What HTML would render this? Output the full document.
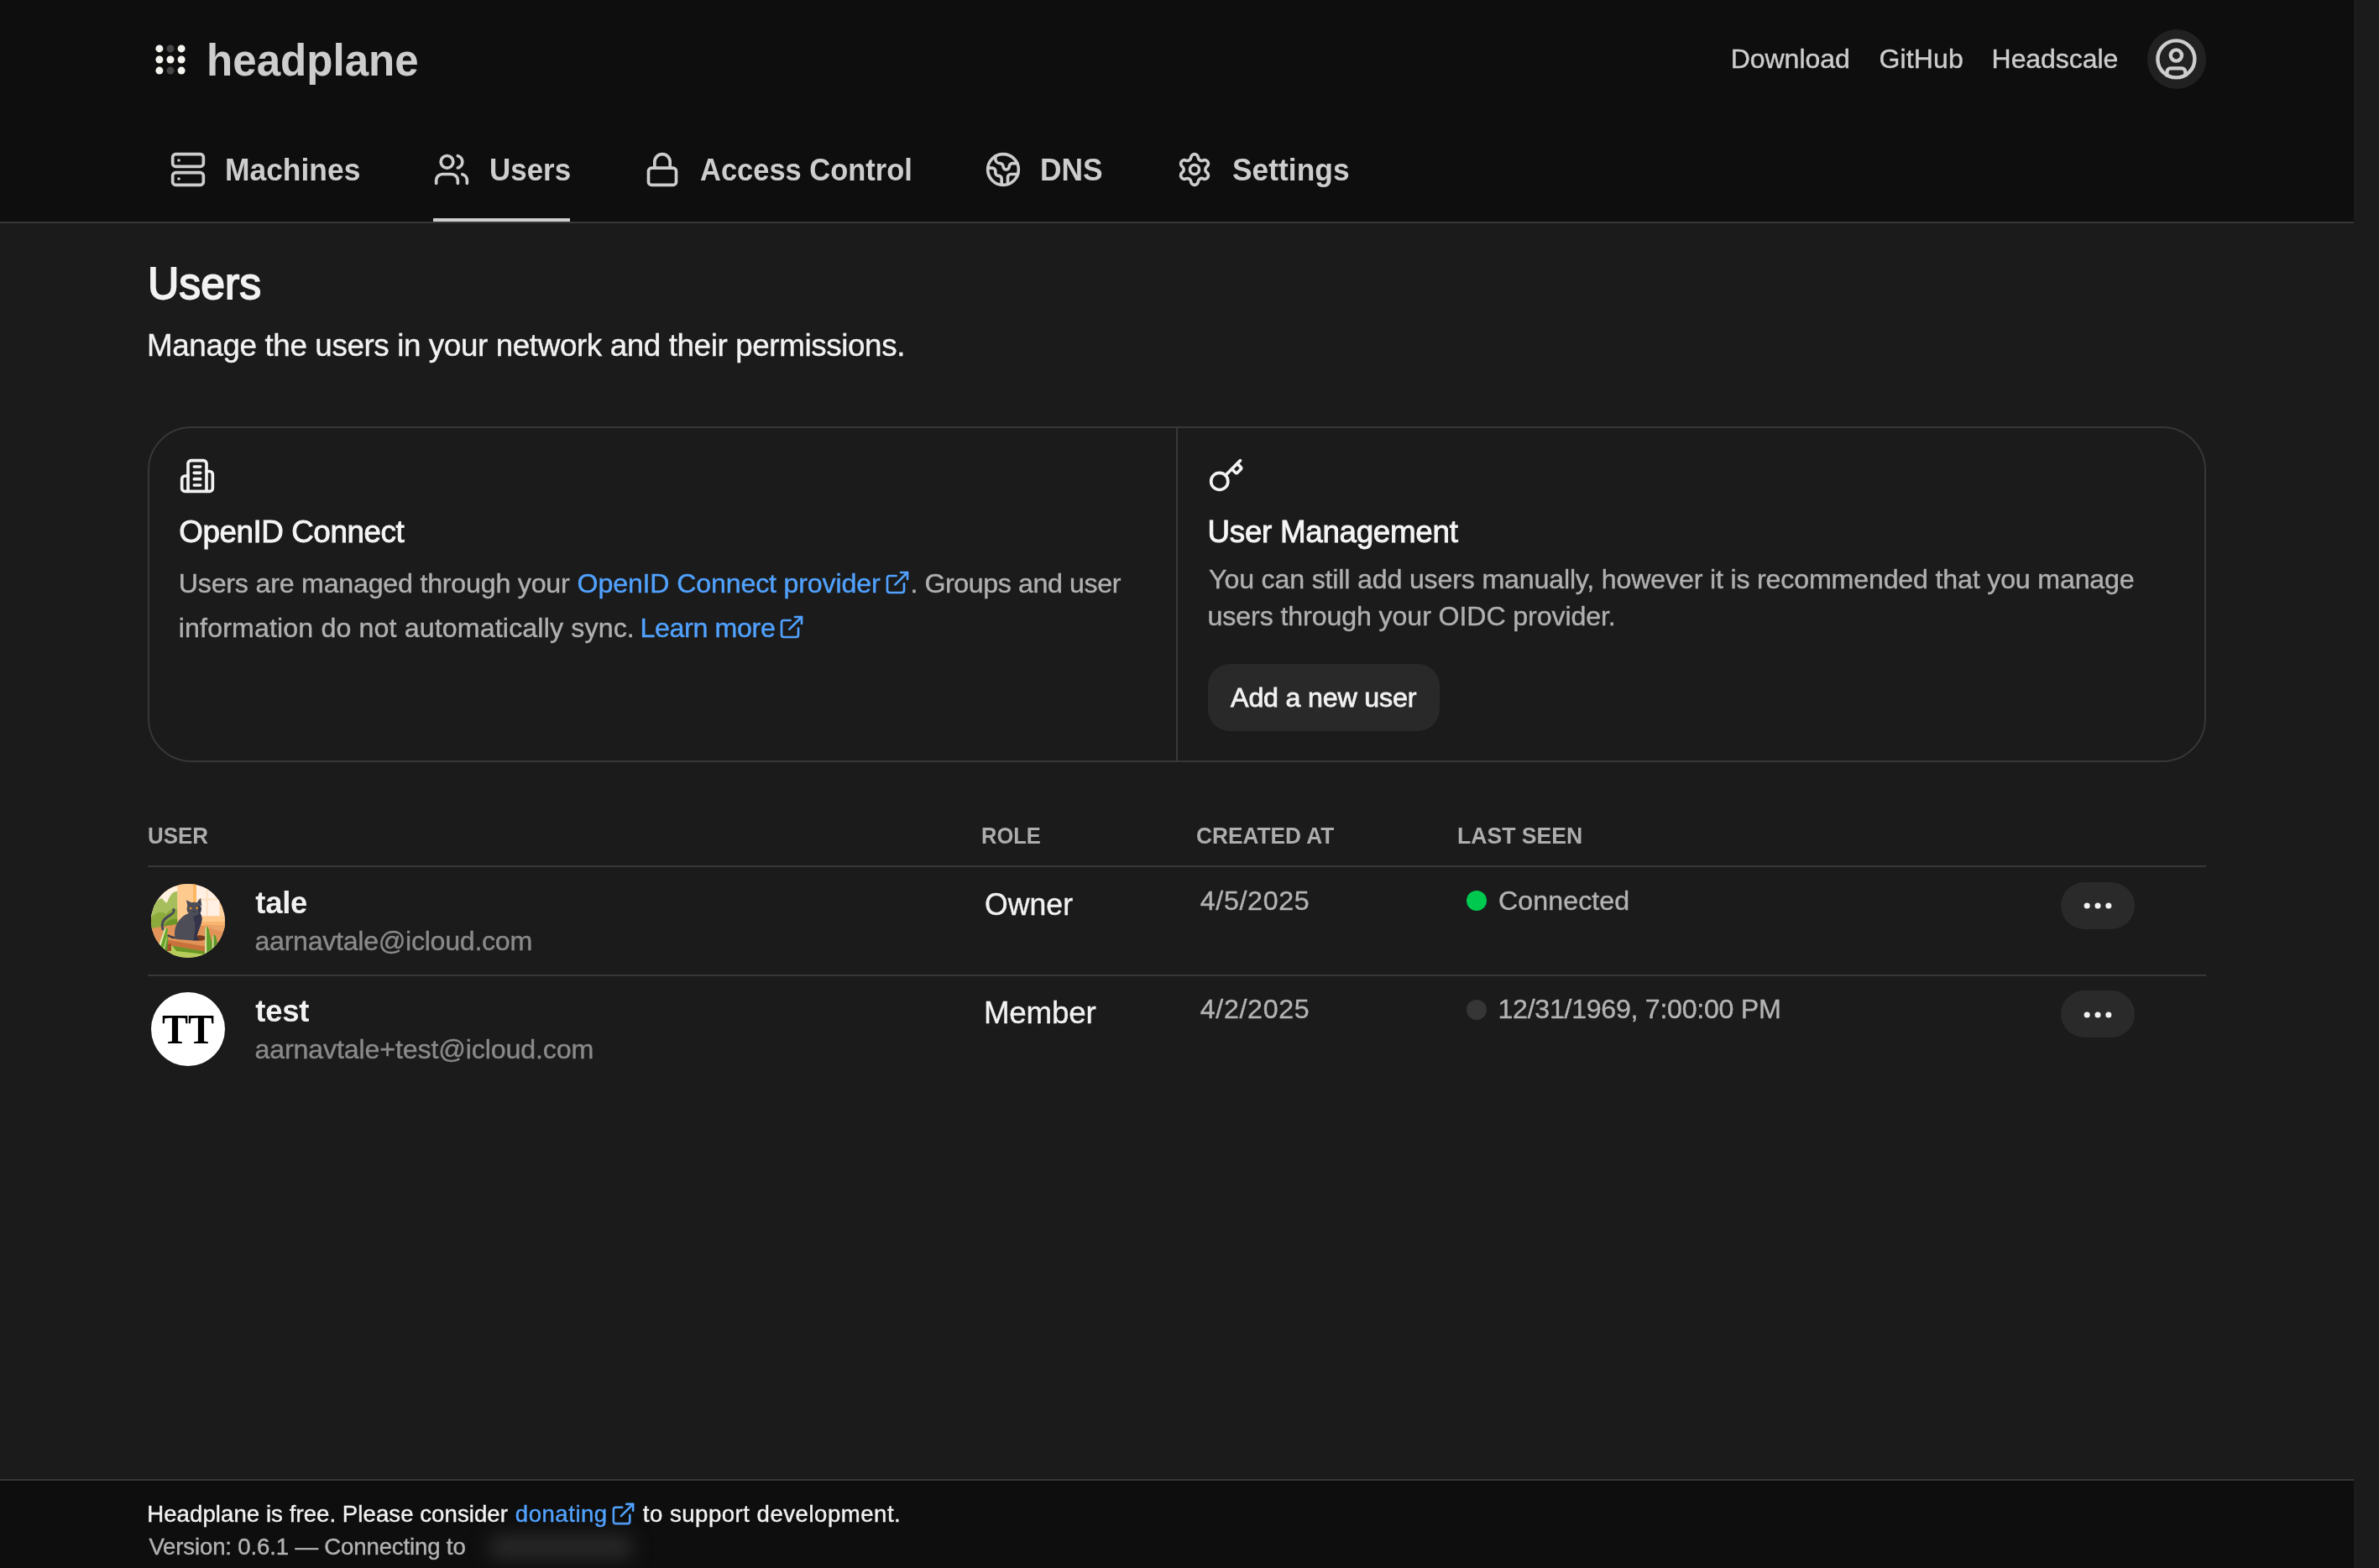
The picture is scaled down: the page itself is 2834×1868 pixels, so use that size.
<!DOCTYPE html>
<html lang="en">
<head>
<meta charset="utf-8">
<title>Users | Headplane</title>
<style>
*{box-sizing:border-box;margin:0;padding:0}
html,body{width:2834px;height:1868px;background:#1b1b1b}
body{font-family:"Liberation Sans",sans-serif;color:#f2f2f2}
#root{position:relative;width:2834px;height:1868px;overflow:hidden;background:#1b1b1b}
.a{position:absolute}
.t{position:absolute;white-space:pre;display:block;transform-origin:0 0}
svg{position:absolute;overflow:visible}
.ic{fill:none;stroke:currentColor;stroke-width:2;stroke-linecap:round;stroke-linejoin:round}
#hdr{left:0;top:0;width:2804px;height:266px;background:#0e0e0e;border-bottom:2px solid #373737}
#ftr{left:0;top:1762px;width:2804px;height:106px;background:#0e0e0e;border-top:2px solid #373737}
.rule{left:176px;width:2452px;height:2px;background:#373737}
#card{left:176px;top:508px;width:2452px;height:400px;border:2px solid #373737;border-radius:52px}
#div{left:1401px;top:510px;width:2px;height:396px;background:#373737}
.pill{background:#2a2a2a;border-radius:28px;width:88px;height:56px;left:2455px}
</style>
</head>
<body>
<div id="root">
<div id="hdr" class="a"></div>
<div id="ftr" class="a"></div>

<!-- logo dots -->
<svg style="left:182.65px;top:50.75px;color:#f5f3ee" width="40" height="40" viewBox="0 0 40 40">
<g fill="#f5f3ee">
<circle cx="6.9" cy="6.9" r="4.5"/><circle cx="33.1" cy="6.9" r="4.5"/>
<circle cx="6.9" cy="20" r="4.5"/><circle cx="20" cy="20" r="4.5"/><circle cx="33.1" cy="20" r="4.5"/>
<circle cx="6.9" cy="33.1" r="4.5"/><circle cx="33.1" cy="33.1" r="4.5"/>
</g>
<g fill="#464646"><circle cx="20" cy="6.9" r="4.5"/><circle cx="20" cy="33.1" r="4.5"/></g>
</svg>

<!-- user button -->
<div class="a" style="left:2557.8px;top:35.3px;width:70.4px;height:70.4px;border-radius:50%;background:#212121"></div>
<svg class="ic" style="left:2565.7px;top:44.1px;color:#cdcdcd" width="52.8" height="52.8" viewBox="0 0 24 24"><circle cx="12" cy="12" r="10"/><circle cx="12" cy="10" r="3"/><path d="M7 20.662V19a2 2 0 0 1 2-2h6a2 2 0 0 1 2 2v1.662"/></svg>

<!-- nav icons -->
<svg class="ic" style="left:202px;top:180.3px;color:#cdcdcd" width="44" height="44" viewBox="0 0 24 24"><rect width="20" height="8" x="2" y="2" rx="2" ry="2"/><rect width="20" height="8" x="2" y="14" rx="2" ry="2"/><line x1="6" x2="6.01" y1="6" y2="6"/><line x1="6" x2="6.01" y1="18" y2="18"/></svg>
<svg class="ic" style="left:516px;top:180.2px;color:#cdcdcd" width="44" height="44" viewBox="0 0 24 24"><path d="M16 21v-2a4 4 0 0 0-4-4H6a4 4 0 0 0-4 4v2"/><path d="M16 3.128a4 4 0 0 1 0 7.744"/><path d="M22 21v-2a4 4 0 0 0-3-3.87"/><circle cx="9" cy="7" r="4"/></svg>
<svg class="ic" style="left:767.2px;top:180.3px;color:#cdcdcd" width="44" height="44" viewBox="0 0 24 24"><rect width="18" height="11" x="3" y="11" rx="2" ry="2"/><path d="M7 11V7a5 5 0 0 1 10 0v4"/></svg>
<svg class="ic" style="left:1172.9px;top:180.3px;color:#cdcdcd" width="44" height="44" viewBox="0 0 24 24"><path d="M21.54 15H17a2 2 0 0 0-2 2v4.54"/><path d="M7 3.34V5a3 3 0 0 0 3 3a2 2 0 0 1 2 2c0 1.1.9 2 2 2a2 2 0 0 0 2-2c0-1.1.9-2 2-2h3.17"/><path d="M11 21.95V18a2 2 0 0 0-2-2a2 2 0 0 1-2-2v-1a2 2 0 0 0-2-2H2.05"/><circle cx="12" cy="12" r="10"/></svg>
<svg class="ic" style="left:1400.9px;top:180.3px;color:#cdcdcd" width="44" height="44" viewBox="0 0 24 24"><path d="M9.671 4.136a2.34 2.34 0 0 1 4.659 0 2.34 2.34 0 0 0 3.319 1.915 2.34 2.34 0 0 1 2.33 4.033 2.34 2.34 0 0 0 0 3.831 2.34 2.34 0 0 1-2.33 4.033 2.34 2.34 0 0 0-3.319 1.915 2.34 2.34 0 0 1-4.659 0 2.34 2.34 0 0 0-3.32-1.915 2.34 2.34 0 0 1-2.33-4.033 2.34 2.34 0 0 0 0-3.831A2.34 2.34 0 0 1 6.35 6.051a2.34 2.34 0 0 0 3.319-1.915"/><circle cx="12" cy="12" r="3"/></svg>
<div class="a" style="left:516px;top:260px;width:163px;height:4px;background:#cdcdcd"></div>

<!-- card -->
<div id="card" class="a"></div>
<div id="div" class="a"></div>
<svg class="ic" style="left:213.15px;top:544.9px;color:#f2f2f2" width="44" height="44" viewBox="0 0 24 24"><path d="M6 22V4a2 2 0 0 1 2-2h8a2 2 0 0 1 2 2v18Z"/><path d="M6 12H4a2 2 0 0 0-2 2v6a2 2 0 0 0 2 2h2"/><path d="M18 9h2a2 2 0 0 1 2 2v9a2 2 0 0 1-2 2h-2"/><path d="M10 6h4"/><path d="M10 10h4"/><path d="M10 14h4"/><path d="M10 18h4"/></svg>
<svg class="ic" style="left:1438.6px;top:544.9px;color:#f2f2f2" width="44" height="44" viewBox="0 0 24 24"><path d="m15.5 7.5 2.3 2.3a1 1 0 0 0 1.4 0l2.1-2.1a1 1 0 0 0 0-1.4L19 4"/><path d="m21 2-9.6 9.6"/><circle cx="7.5" cy="15.5" r="5.5"/></svg>
<!-- external link icons -->
<svg class="ic" style="left:1052.5px;top:678.2px;color:#51a2ff" width="32" height="32" viewBox="0 0 24 24"><path d="M15 3h6v6"/><path d="M10 14 21 3"/><path d="M18 13v6a2 2 0 0 1-2 2H5a2 2 0 0 1-2-2V8a2 2 0 0 1 2-2h6"/></svg>
<svg class="ic" style="left:927.2px;top:731.1px;color:#51a2ff" width="32" height="32" viewBox="0 0 24 24"><path d="M15 3h6v6"/><path d="M10 14 21 3"/><path d="M18 13v6a2 2 0 0 1-2 2H5a2 2 0 0 1-2-2V8a2 2 0 0 1 2-2h6"/></svg>
<svg class="ic" style="left:726.9px;top:1787.7px;color:#51a2ff" width="31" height="31" viewBox="0 0 24 24"><path d="M15 3h6v6"/><path d="M10 14 21 3"/><path d="M18 13v6a2 2 0 0 1-2 2H5a2 2 0 0 1-2-2V8a2 2 0 0 1 2-2h6"/></svg>
<!-- button -->
<div class="a" style="left:1439px;top:791px;width:276px;height:80px;border-radius:26px;background:#292929"></div>

<!-- table -->
<div class="a rule" style="top:1031px"></div>
<div class="a rule" style="top:1161px"></div>
<svg style="left:180px;top:1053px" width="88" height="88" viewBox="0 0 88 88">
<defs><clipPath id="cc"><circle cx="44" cy="44" r="44"/></clipPath></defs>
<g clip-path="url(#cc)">
<rect width="88" height="88" fill="#ffd2a0"/>
<rect x="0" y="0" width="32" height="40" fill="#fff1df"/>
<rect x="31.2" y="0" width="23" height="52" fill="#ffca8e"/>
<rect x="50" y="0" width="4" height="40" fill="#ffb663"/>
<rect x="54" y="0" width="27.5" height="38.5" fill="#fff0e3"/>
<rect x="65.5" y="0" width="2" height="38.5" fill="#ffe0c0"/>
<rect x="54" y="17.5" width="27.5" height="2" fill="#ffe0c0"/>
<rect x="54" y="38.5" width="34" height="14" fill="#ffc98b"/>
<rect x="60" y="45" width="28" height="8" fill="#f7b56f"/>
<!-- bushes -->
<path d="M0 30 Q6 18 13 17 Q18 24 19 22 Q24 8 31.2 9 V56 H0Z" fill="#a6bf5c"/>
<path d="M0 40 Q10 30 18 36 Q24 28 31.2 30 V56 H0Z" fill="#8cab3c"/>
<path d="M14 50 Q22 40 31.2 42 V54 H14Z" fill="#6c9527"/>
<!-- bench top -->
<path d="M0 53 L31 48 L88 50 V74 L64.6 78 L19.6 72 L0 74Z" fill="#e29358"/>
<path d="M30 48 L60 50 L88 58 V50 L54 49Z" fill="#eda468"/>
<!-- grass -->
<path d="M0 74 L19.6 72 L64.6 78 L88 72 V88 H0Z" fill="#b7cd5b"/>
<path d="M24 72 L64.6 80 V84 L30 80Z" fill="#6a9826"/>
<!-- bench front & leg -->
<path d="M19.6 66.7 L64.6 74.4 V80.4 L19.6 72.7Z" fill="#c8713a"/>
<rect x="18" y="71.5" width="6" height="8.5" fill="#a5522b"/>
<!-- cat shadow -->
<ellipse cx="57" cy="64.5" rx="9" ry="3.2" fill="#7a3c1e"/>
<!-- tail -->
<path d="M14 54 C11 44 18 40 23 37 C27 34.5 27.5 32 26.8 30.5" fill="none" stroke="#4a4b56" stroke-width="3" stroke-linecap="round"/>
<path d="M20.5 61.5 C24 64 28 64.5 32 64" fill="none" stroke="#3b3c48" stroke-width="2.2" stroke-linecap="round"/>
<!-- cat body -->
<path d="M45 35 C36 38 30 46 28.5 54 C27.5 60 28 64 31 66 L50 67.5 L56.5 67 C58 66 57 64.5 54.5 63.5 C55 57 60 50 60.5 42 C60.7 38 59 35 57 34Z" fill="#4c4d57"/>
<path d="M50 40 C54 48 52 58 50.5 67.5 L56.5 67 C58 66 57 64.5 54.5 63.5 C55 57 60 50 60.5 42 C60.7 38 59 35 57 34Z" fill="#33344a"/>
<!-- head -->
<ellipse cx="51.3" cy="29.8" rx="8.8" ry="8" fill="#4c4d57"/>
<path d="M42 19.3 L48.5 22.6 L43.6 27.5Z" fill="#4c4d57"/>
<path d="M59 16.8 L60.3 26.5 L54.5 22.3Z" fill="#3e3f4c"/>
<path d="M56 24 C60 28 60.5 34 57 37 C56 33 57 28 56 24Z" fill="#33344a"/>
<circle cx="47" cy="29.1" r="1.35" fill="#e8921e"/>
<circle cx="54.6" cy="28.8" r="1.35" fill="#e8921e"/>
<path d="M50 32.5 L52.4 32.5 L51.2 34.3Z" fill="#2a2b38"/>
<!-- foreground plants -->
<path d="M8 76 L16 53.5 Q18.5 51 20 54 L19 63 L15.5 82Z" fill="#69a82b"/>
<path d="M8 76 L16 53.5 Q17 52.3 18 52.4 L10.5 77Z" fill="#e6e7b2"/>
<path d="M14 80 L18.5 64 Q20 62 20.5 64.5 L19 80Z" fill="#5f9e27"/>
<path d="M14 80 L18.5 64 L19.3 63.5 L15.5 80Z" fill="#dfe3a6"/>
<path d="M64 83 L64.5 53 Q66 49.5 68 52 L72.5 70 L73.5 82Z" fill="#62a02a"/>
<path d="M64 83 L64.5 53 Q65 51.5 66 51 L66.2 83Z" fill="#e2e6ae"/>
<path d="M72.5 80 L73.5 62 Q75.5 59.5 77 62 L80 76Z" fill="#589826"/>
<path d="M72.5 80 L73.5 62 L74.6 61 L74.5 80Z" fill="#dfe3a6"/>
</g>
</svg>

<div class="a" style="left:180px;top:1182px;width:88px;height:88px;border-radius:50%;background:#fff"></div>
<div class="a" style="left:1746.6px;top:1060.7px;width:24px;height:24px;border-radius:50%;background:#00c950"></div>
<div class="a" style="left:1746.6px;top:1190.5px;width:24px;height:24px;border-radius:50%;background:#363636"></div>
<div class="a pill" style="top:1051px"></div>
<div class="a pill" style="top:1180px"></div>
<svg style="left:2477.0px;top:1057px;color:#f2f2f2" width="44" height="44" viewBox="0 0 24 24" fill="currentColor"><circle cx="5" cy="12" r="1.93"/><circle cx="12" cy="12" r="1.93"/><circle cx="19" cy="12" r="1.93"/></svg>
<svg style="left:2477.0px;top:1187px;color:#f2f2f2" width="44" height="44" viewBox="0 0 24 24" fill="currentColor"><circle cx="5" cy="12" r="1.93"/><circle cx="12" cy="12" r="1.93"/><circle cx="19" cy="12" r="1.93"/></svg>

<!-- footer blur -->
<div class="a" style="left:582px;top:1829px;width:172px;height:28px;background:#2a2a2a;filter:blur(11px);border-radius:12px"></div>

<div id="tx" class="a" style="left:0;top:0;width:2834px;height:1868px;will-change:transform">
<span class="t" style="left:245.71px;top:44px;font-size:54px;line-height:54px;color:#cdcdcd;transform:scaleX(0.9464);font-weight:700;">headplane</span>
<span class="t" style="left:2061.70px;top:54px;font-size:32px;line-height:32px;color:#cdcdcd;letter-spacing:-0.031px;-webkit-text-stroke:0.4px #cdcdcd;">Download</span>
<span class="t" style="left:2238.40px;top:54px;font-size:32px;line-height:32px;color:#cdcdcd;letter-spacing:0.141px;-webkit-text-stroke:0.4px #cdcdcd;">GitHub</span>
<span class="t" style="left:2372.60px;top:54px;font-size:32px;line-height:32px;color:#cdcdcd;letter-spacing:-0.063px;-webkit-text-stroke:0.4px #cdcdcd;">Headscale</span>
<span class="t" style="left:267.79px;top:185px;font-size:36.5px;line-height:36.5px;color:#cdcdcd;transform:scaleX(0.9700);font-weight:700;">Machines</span>
<span class="t" style="left:582.96px;top:185px;font-size:36.5px;line-height:36.5px;color:#cdcdcd;transform:scaleX(0.9575);font-weight:700;">Users</span>
<span class="t" style="left:834.16px;top:185px;font-size:36.5px;line-height:36.5px;color:#cdcdcd;transform:scaleX(0.9441);font-weight:700;">Access Control</span>
<span class="t" style="left:1238.89px;top:185px;font-size:36.5px;line-height:36.5px;color:#cdcdcd;transform:scaleX(0.9686);font-weight:700;">DNS</span>
<span class="t" style="left:1468.45px;top:185px;font-size:36.5px;line-height:36.5px;color:#cdcdcd;transform:scaleX(0.9694);font-weight:700;">Settings</span>
<span class="t" style="left:176.17px;top:310px;font-size:54px;line-height:54px;color:#f2f2f2;transform:scaleX(0.9584);-webkit-text-stroke:1.8px #f2f2f2;">Users</span>
<span class="t" style="left:175.02px;top:394px;font-size:36.8px;line-height:36.8px;color:#f2f2f2;letter-spacing:-0.390px;-webkit-text-stroke:0.4px #f2f2f2;">Manage the users in your network and their permissions.</span>
<span class="t" style="left:213.22px;top:616px;font-size:36.8px;line-height:36.8px;color:#f5f5f5;letter-spacing:-0.432px;-webkit-text-stroke:0.9px #f5f5f5;">OpenID Connect</span>
<span class="t" style="left:212.79px;top:679px;font-size:32.2px;line-height:32.2px;color:#b0b0b0;letter-spacing:-0.219px;-webkit-text-stroke:0.4px #b0b0b0;">Users are managed through your</span>
<span class="t" style="left:687.59px;top:679px;font-size:32.2px;line-height:32.2px;color:#51a2ff;letter-spacing:-0.180px;-webkit-text-stroke:0.4px #51a2ff;">OpenID Connect provider</span>
<span class="t" style="left:1084.38px;top:679px;font-size:32.2px;line-height:32.2px;color:#b0b0b0;letter-spacing:-0.411px;-webkit-text-stroke:0.4px #b0b0b0;">. Groups and user</span>
<span class="t" style="left:212.79px;top:732px;font-size:32.2px;line-height:32.2px;color:#b0b0b0;letter-spacing:0.122px;-webkit-text-stroke:0.4px #b0b0b0;">information do not automatically sync.</span>
<span class="t" style="left:762.48px;top:732px;font-size:32.2px;line-height:32.2px;color:#51a2ff;letter-spacing:-0.360px;-webkit-text-stroke:0.4px #51a2ff;">Learn more</span>
<span class="t" style="left:1438.55px;top:616px;font-size:36.8px;line-height:36.8px;color:#f5f5f5;letter-spacing:-0.310px;-webkit-text-stroke:0.9px #f5f5f5;">User Management</span>
<span class="t" style="left:1440.10px;top:674px;font-size:32.2px;line-height:32.2px;color:#b0b0b0;letter-spacing:-0.187px;-webkit-text-stroke:0.4px #b0b0b0;">You can still add users manually, however it is recommended that you manage</span>
<span class="t" style="left:1438.59px;top:718px;font-size:32.2px;line-height:32.2px;color:#b0b0b0;letter-spacing:-0.124px;-webkit-text-stroke:0.4px #b0b0b0;">users through your OIDC provider.</span>
<span class="t" style="left:1466.10px;top:815px;font-size:32.2px;line-height:32.2px;color:#f2f2f2;letter-spacing:-0.184px;-webkit-text-stroke:0.8px #f2f2f2;">Add a new user</span>
<span class="t" style="left:175.99px;top:982px;font-size:27.8px;line-height:27.8px;color:#adadad;transform:scaleX(0.9323);font-weight:700;">USER</span>
<span class="t" style="left:1168.71px;top:982px;font-size:27.8px;line-height:27.8px;color:#adadad;transform:scaleX(0.9177);font-weight:700;">ROLE</span>
<span class="t" style="left:1424.98px;top:982px;font-size:27.8px;line-height:27.8px;color:#adadad;transform:scaleX(0.9442);font-weight:700;">CREATED AT</span>
<span class="t" style="left:1736.14px;top:982px;font-size:27.8px;line-height:27.8px;color:#adadad;transform:scaleX(0.9565);font-weight:700;">LAST SEEN</span>
<span class="t" style="left:304.30px;top:1058px;font-size:36.5px;line-height:36.5px;color:#f2f2f2;letter-spacing:-0.262px;font-weight:700;">tale</span>
<span class="t" style="left:303.49px;top:1105px;font-size:32.2px;line-height:32.2px;color:#8a8a8a;letter-spacing:-0.305px;-webkit-text-stroke:0.4px #8a8a8a;">aarnavtale@icloud.com</span>
<span class="t" style="left:1173.13px;top:1060px;font-size:36.8px;line-height:36.8px;color:#f2f2f2;transform:scaleX(0.9692);-webkit-text-stroke:0.4px #f2f2f2;">Owner</span>
<span class="t" style="left:1429.70px;top:1057px;font-size:32.2px;line-height:32.2px;color:#b3b3b3;letter-spacing:0.681px;-webkit-text-stroke:0.4px #b3b3b3;">4/5/2025</span>
<span class="t" style="left:1784.99px;top:1057px;font-size:32.2px;line-height:32.2px;color:#b3b3b3;letter-spacing:0.059px;-webkit-text-stroke:0.4px #b3b3b3;">Connected</span>
<span class="t" style="left:304.30px;top:1187px;font-size:36.5px;line-height:36.5px;color:#f2f2f2;letter-spacing:-0.243px;font-weight:700;">test</span>
<span class="t" style="left:303.49px;top:1234px;font-size:32.2px;line-height:32.2px;color:#8a8a8a;letter-spacing:-0.148px;-webkit-text-stroke:0.4px #8a8a8a;">aarnavtale+test@icloud.com</span>
<span class="t" style="left:1171.92px;top:1189px;font-size:36.8px;line-height:36.8px;color:#f2f2f2;letter-spacing:-0.242px;-webkit-text-stroke:0.4px #f2f2f2;">Member</span>
<span class="t" style="left:1429.70px;top:1186px;font-size:32.2px;line-height:32.2px;color:#b3b3b3;letter-spacing:0.681px;-webkit-text-stroke:0.4px #b3b3b3;">4/2/2025</span>
<span class="t" style="left:1784.49px;top:1186px;font-size:32.2px;line-height:32.2px;color:#b3b3b3;letter-spacing:-0.302px;-webkit-text-stroke:0.4px #b3b3b3;">12/31/1969, 7:00:00 PM</span>
<span class="t" style="left:192.97px;top:1200px;font-size:51.5px;line-height:51.5px;color:#000;transform:scaleX(0.9043);font-weight:700;font-family:'Liberation Serif',serif;">TT</span>
<span class="t" style="left:175.24px;top:1790px;font-size:27.6px;line-height:27.6px;color:#f2f2f2;letter-spacing:0.053px;-webkit-text-stroke:0.4px #f2f2f2;">Headplane is free. Please consider</span>
<span class="t" style="left:613.84px;top:1790px;font-size:27.6px;line-height:27.6px;color:#51a2ff;letter-spacing:0.502px;-webkit-text-stroke:0.4px #51a2ff;">donating</span>
<span class="t" style="left:765.80px;top:1790px;font-size:27.6px;line-height:27.6px;color:#f2f2f2;letter-spacing:0.494px;-webkit-text-stroke:0.4px #f2f2f2;">to support development.</span>
<span class="t" style="left:177.40px;top:1829px;font-size:27.6px;line-height:27.6px;color:#b3b3b3;letter-spacing:-0.159px;-webkit-text-stroke:0.4px #b3b3b3;">Version: 0.6.1 — Connecting to</span>
</div>
</div>
</body>
</html>
